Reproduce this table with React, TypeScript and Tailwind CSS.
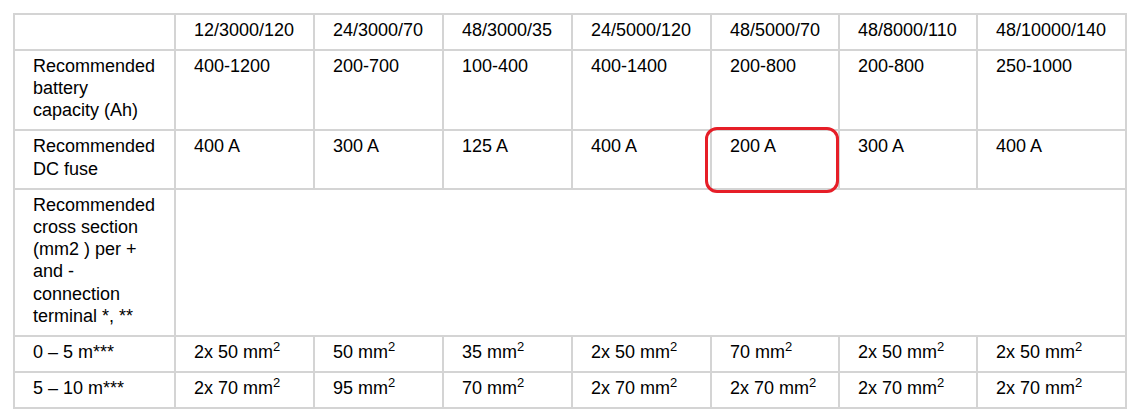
import React from "react";

const cols = ["12/3000/120", "24/3000/70", "48/3000/35", "24/5000/120", "48/5000/70", "48/8000/110", "48/10000/140"];
const widths = ["w-[161px]", "w-[139px]", "w-[129px]", "w-[129px]", "w-[139px]", "w-[128px]", "w-[138px]", "w-[149px]"];

const capacity = ["400-1200", "200-700", "100-400", "400-1400", "200-800", "200-800", "250-1000"];
const fuse = ["400 A", "300 A", "125 A", "400 A", "200 A", "300 A", "400 A"];
const short = ["2x 50", "50", "35", "2x 50", "70", "2x 50", "2x 50"];
const long = ["2x 70", "95", "70", "2x 70", "2x 70", "2x 70", "2x 70"];

const cell = "border-2 border-[#d4d4d4] align-top pt-[4px] pb-[7.6px] pl-[18px] pr-1 text-left font-normal";

function Mm({ v }: { v: string }) {
  return (
    <>
      {v} mm<sup className="text-[13px]">2</sup>
    </>
  );
}

export default function App() {
  return (
    <div className="relative w-[1145px] h-[417px] bg-white pt-[13px] pl-[13px] text-black text-[18px] leading-[22.3px] font-['Liberation_Sans',Arial,sans-serif]">
      <table className="table-fixed border-collapse w-[1112px] border-2 border-[#d4d4d4]">
        <colgroup>
          {widths.map((w, i) => (
            <col key={i} className={w} />
          ))}
        </colgroup>
        <thead>
          <tr>
            <th className={cell}></th>
            {cols.map((c) => (
              <th key={c} className={cell}>
                {c}
              </th>
            ))}
          </tr>
        </thead>
        <tbody>
          <tr>
            <td className={cell}>
              Recommended
              <br />
              battery
              <br />
              capacity (Ah)
            </td>
            {capacity.map((v, i) => (
              <td key={i} className={cell}>
                {v}
              </td>
            ))}
          </tr>
          <tr>
            <td className={cell}>
              Recommended
              <br />
              DC fuse
            </td>
            {fuse.map((v, i) => (
              <td key={i} className={cell}>
                {v}
              </td>
            ))}
          </tr>
          <tr>
            <td className={cell}>
              Recommended
              <br />
              cross section
              <br />
              (mm2 ) per +
              <br />
              and -
              <br />
              connection
              <br />
              terminal *, **
            </td>
            <td colSpan={7} className={cell}></td>
          </tr>
          <tr>
            <td className={cell}>0 – 5 m***</td>
            {short.map((v, i) => (
              <td key={i} className={cell}>
                <Mm v={v} />
              </td>
            ))}
          </tr>
          <tr>
            <td className={cell}>5 – 10 m***</td>
            {long.map((v, i) => (
              <td key={i} className={cell}>
                <Mm v={v} />
              </td>
            ))}
          </tr>
        </tbody>
      </table>
      <div className="absolute left-[705px] top-[127px] w-[134px] h-[66px] rounded-[12px] border-[3px] border-[#e61e28]" />
    </div>
  );
}
